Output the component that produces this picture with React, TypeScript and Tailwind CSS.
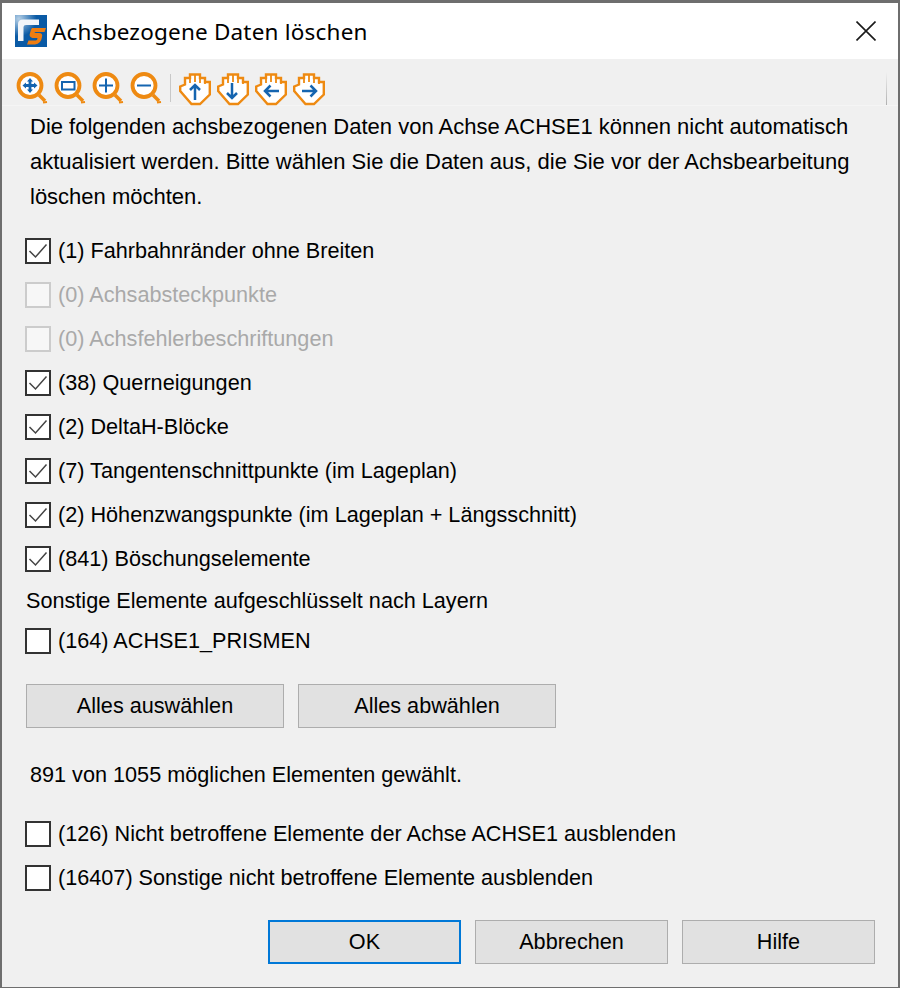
// "Achsbezogene Daten löschen" dialog: title bar, zoom/pan toolbar, checkbox list and buttons.

const ORANGE = "#ee8a12";
const BLUE = "#1565b0";

function Magnifier({ glyph }: { glyph: "move" | "rect" | "plus" | "minus" }) {
  return (
    <svg width="33" height="33" viewBox="0 0 33 33" className="shrink-0">
      <path d="M23 23 L29 29" stroke={ORANGE} strokeWidth="3.6" />
      <path d="M27 30.5 L31 30" stroke={ORANGE} strokeWidth="2" />
      <circle cx="14" cy="13.5" r="11.5" fill="#fff" stroke={ORANGE} strokeWidth="3.8" />
      {glyph === "move" && (
        <path
          d="M14 6 L17 9.5 H15.4 V12.1 H18 V10.5 L21.5 13.5 L18 16.5 V14.9 H15.4 V17.5 H17 L14 21 L11 17.5 H12.6 V14.9 H10 V16.5 L6.5 13.5 L10 10.5 V12.1 H12.6 V9.5 H11 Z"
          fill={BLUE}
        />
      )}
      {glyph === "rect" && <rect x="8" y="10" width="12.5" height="7.5" fill="none" stroke={BLUE} strokeWidth="2" />}
      {glyph === "plus" && <path d="M7 13.5 H21 M14 6.5 V20.5" stroke={BLUE} strokeWidth="2" />}
      {glyph === "minus" && <path d="M7 13.5 H21" stroke={BLUE} strokeWidth="2" />}
    </svg>
  );
}

const ARROWS = {
  up: "M16 27 V12 M11 17 L16 12 L21 17",
  down: "M15 10 V25 M10 20 L15 25 L20 20",
  left: "M10 18 H24 M15.5 12.5 L10 18 L15.5 23.5",
  right: "M9 18 H23 M17.5 12.5 L23 18 L17.5 23.5",
};

function Hand({ dir }: { dir: keyof typeof ARROWS }) {
  return (
    <svg width="32" height="33" viewBox="0 0 32 33" className="shrink-0">
      <path
        d="M1.2 13.5 L6 11.5 V5 H11 V1.5 H21 V5 H26 V9 H30.8 V21.5 L21 31 H12.5 L1.2 18 Z"
        fill="#fff"
        stroke={ORANGE}
        strokeWidth="2.4"
        strokeLinejoin="miter"
      />
      <path d="M11 5 V10 M16 2 V9 M21 5 V10 M26 9 V11" stroke={ORANGE} strokeWidth="1.8" />
      <path d={ARROWS[dir]} fill="none" stroke={BLUE} strokeWidth="2.5" />
    </svg>
  );
}

function Check({ label, checked, disabled }: { label: string; checked?: boolean; disabled?: boolean }) {
  return (
    <div className={disabled ? "flex h-[26px] items-center gap-[7px] text-[#a9a9a9]" : "flex h-[26px] items-center gap-[7px]"}>
      <span
        className={
          disabled
            ? "flex size-[26px] shrink-0 items-center justify-center border-2 border-[#cccccc] bg-[#f7f7f7]"
            : "flex size-[26px] shrink-0 items-center justify-center border-2 border-[#333333] bg-white"
        }
      >
        {checked && (
          <svg width="22" height="22" viewBox="0 0 22 22">
            <path d="M2.5 11 L8.5 17 L19.5 4.5" fill="none" stroke="#444" strokeWidth="1.5" />
          </svg>
        )}
      </span>
      <span className="pb-px">{label}</span>
    </div>
  );
}

function Button({ label, focused, className }: { label: string; focused?: boolean; className: string }) {
  return (
    <button
      className={
        (focused ? "border-2 border-[#0078d7] " : "border border-[#adadad] ") +
        "flex items-center justify-center bg-[#e1e1e1] pb-[2px] " +
        className
      }
    >
      {label}
    </button>
  );
}

export default function App() {
  return (
    <div className="h-[988px] w-[900px] overflow-hidden border-x-2 border-t-[3px] border-b border-[#6e6e6e] bg-[#f0f0f0] font-['Liberation_Sans',Arial,sans-serif] text-[21.65px] leading-[35px] text-black">
      {/* title bar */}
      <div className="flex h-[56px] items-center bg-white pl-[13px] pr-[22px]">
        <svg width="32" height="32" viewBox="0 0 32 32" className="shrink-0">
          <defs>
            <radialGradient id="rsGlow" cx="0.12" cy="0.12" r="0.55">
              <stop offset="0" stopColor="#b4cfe6" />
              <stop offset="1" stopColor="#0a5aa5" />
            </radialGradient>
          </defs>
          <rect width="32" height="32" fill="url(#rsGlow)" />
          <path d="M3 26 V9 Q3 4.5 8 4.5 H24 V10 H11 Q8.5 10 8.5 12 V26 Z" fill="#f2f5f9" />
          <path
            d="M17 13 H31 L29.5 17 H21 Q19.5 17 19.5 18 H24 Q28 18 27 22 Q26 29 20 29.5 H12 L13.5 25.5 H21 Q22.5 25 22.5 23 H17.5 Q13.5 22 15 18 Q16 14 17 13 Z"
            fill="#ee7d11"
          />
        </svg>
        <h1 className="ml-[5px] mt-[2px] flex-1 font-['Noto_Sans',sans-serif] text-[22.5px] leading-none tracking-[0.2px]">
          Achsbezogene Daten löschen
        </h1>
        <svg width="20" height="20" viewBox="0 0 20 20" className="shrink-0">
          <path d="M0.5 0.5 L19.5 19.5 M19.5 0.5 L0.5 19.5" stroke="#1a1a1a" strokeWidth="1.6" />
        </svg>
      </div>

      {/* toolbar */}
      <div className="relative flex h-[47px] items-start border-b border-[#f5f5f5] pl-[14px] pt-[13px]">
        <div className="flex gap-[5px]">
          <Magnifier glyph="move" />
          <Magnifier glyph="rect" />
          <Magnifier glyph="plus" />
          <Magnifier glyph="minus" />
        </div>
        <span className="ml-[7px] mr-[8px] mt-[2px] h-[28px] w-px bg-[#c8c8c8]" />
        <div className="mt-[1px] flex gap-[6px]">
          <Hand dir="up" />
          <Hand dir="down" />
          <Hand dir="left" />
          <Hand dir="right" />
        </div>
        <span className="absolute right-[11px] top-[13px] h-[33px] w-px bg-gradient-to-b from-[#f0f0f0] to-[#b0b0b0]" />
      </div>

      {/* body */}
      <div className="pl-[24px]">
        <p className="w-[840px] pl-[4px] pt-[3px] text-[22px]">
          Die folgenden achsbezogenen Daten von Achse ACHSE1 können nicht automatisch aktualisiert werden. Bitte wählen Sie die Daten aus, die Sie vor der Achsbearbeitung löschen möchten.
        </p>

        <div className="-ml-px mt-[24px] flex flex-col gap-[18px]">
          <Check checked label="(1) Fahrbahnränder ohne Breiten" />
          <Check disabled label="(0) Achsabsteckpunkte" />
          <Check disabled label="(0) Achsfehlerbeschriftungen" />
          <Check checked label="(38) Querneigungen" />
          <Check checked label="(2) DeltaH-Blöcke" />
          <Check checked label="(7) Tangentenschnittpunkte (im Lageplan)" />
          <Check checked label="(2) Höhenzwangspunkte (im Lageplan + Längsschnitt)" />
          <Check checked label="(841) Böschungselemente" />
        </div>

        <p className="mt-[16px] leading-[26px]">Sonstige Elemente aufgeschlüsselt nach Layern</p>
        <div className="-ml-px mt-[14px]">
          <Check label="(164) ACHSE1_PRISMEN" />
        </div>

        <div className="mt-[30px] flex gap-[14px]">
          <Button label="Alles auswählen" className="h-[44px] w-[258px]" />
          <Button label="Alles abwählen" className="h-[44px] w-[258px]" />
        </div>

        <p className="ml-[4px] mt-[34px] leading-[26px]">891 von 1055 möglichen Elementen gewählt.</p>

        <div className="-ml-px mt-[33px] flex flex-col gap-[18px]">
          <Check label="(126) Nicht betroffene Elemente der Achse ACHSE1 ausblenden" />
          <Check label="(16407) Sonstige nicht betroffene Elemente ausblenden" />
        </div>

        <div className="mt-[29px] flex gap-[14px] pl-[242px]">
          <Button focused label="OK" className="h-[44px] w-[193px]" />
          <Button label="Abbrechen" className="h-[44px] w-[193px]" />
          <Button label="Hilfe" className="h-[44px] w-[193px]" />
        </div>
      </div>
    </div>
  );
}
